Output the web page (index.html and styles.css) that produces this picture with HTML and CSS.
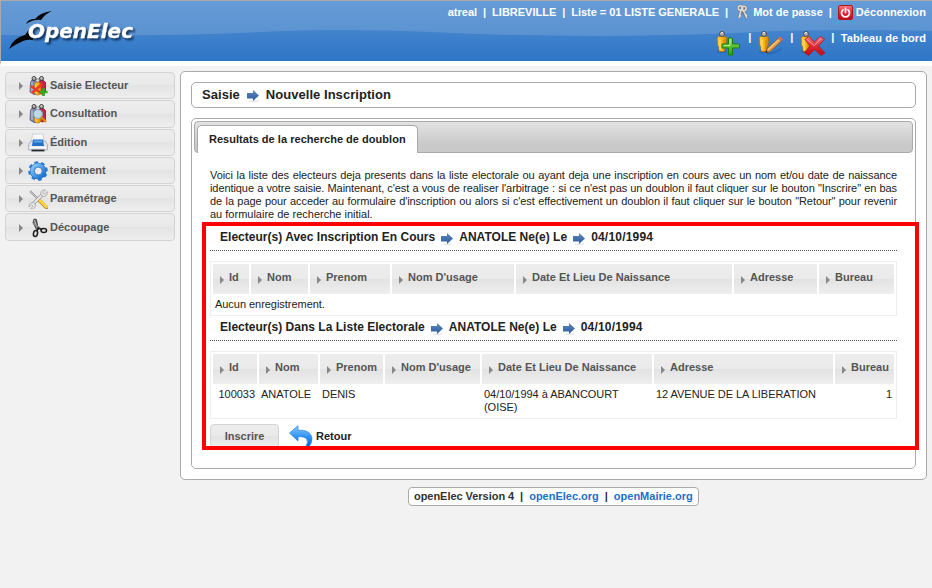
FILE: index.html
```html
<!DOCTYPE html>
<html lang="fr">
<head>
<meta charset="utf-8">
<title>openElec</title>
<link rel="stylesheet" href="styles.css">
</head>
<body>
<svg class="defs" width="0" height="0" aria-hidden="true">
  <defs>
    <linearGradient id="gArrow" x2="0" y2="1"><stop offset="0" stop-color="#5d87be"/><stop offset="1" stop-color="#2c5c9f"/></linearGradient>
    <linearGradient id="gMan" x2="1" y2="0"><stop offset="0" stop-color="#ffd24a"/><stop offset=".5" stop-color="#ffb414"/><stop offset="1" stop-color="#d98200"/></linearGradient>
    <linearGradient id="gGreen" x2="0" y2="1"><stop offset="0" stop-color="#8be05a"/><stop offset="1" stop-color="#2e9e12"/></linearGradient>
    <linearGradient id="gRed" x2="0" y2="1"><stop offset="0" stop-color="#f37c80"/><stop offset=".5" stop-color="#e02a35"/><stop offset="1" stop-color="#b80d18"/></linearGradient>
    <linearGradient id="gBack" x2="0" y2="1"><stop offset="0" stop-color="#8ccbff"/><stop offset=".55" stop-color="#2b90f5"/><stop offset="1" stop-color="#0b62dc"/></linearGradient>
    <linearGradient id="gGear" x2="1" y2="1"><stop offset="0" stop-color="#8ccbfd"/><stop offset="1" stop-color="#176fd0"/></linearGradient>
    <linearGradient id="gTop" x2="0" y2="1"><stop offset="0" stop-color="#659cd7"/><stop offset="1" stop-color="#5a92d1"/></linearGradient>
    <symbol id="arrow" viewBox="0 0 12 12"><path d="M2 11.200h9" stroke="#e3e7ee" stroke-width="1.400"/><path d="M0 3h6V0l6 5.500L6 11V8.500H0z" fill="url(#gArrow)"/></symbol>
    <symbol id="man" viewBox="0 0 12 24"><ellipse cx="6" cy="20.500" rx="5" ry="1.500" fill="#174f90" opacity=".4"/><path d="M1.300 7.500Q1 5.500 3 5.500h6q2 0 1.700 2L10 15l-1 .5-.5 5H3.200l-.5-5L1.500 14z" fill="url(#gMan)" stroke="#a86d08" stroke-width=".7"/><path d="M4 9v10" stroke="#ffe27b"/><path d="M8 9v10" stroke="#c77600" stroke-width=".7"/><circle cx="6" cy="3" r="2.500" fill="#aaa" stroke="#4b4540" stroke-width=".9"/><path d="M4.500 2.500q1-1.500 2.500-.8" stroke="#fff" fill="none"/></symbol>
    <symbol id="people" viewBox="0 0 18 20"><path d="M1.500 6.500 3 4h4.500L9 6v12l-4 .5L1 16z" fill="#8185a9" stroke="#545777" stroke-width=".8"/><path d="M3 6v10" stroke="#b9bbd2" stroke-width="1.300"/><path d="M10 4.500h4.500l2 2V16L14 18l-4-1z" fill="#c32743" stroke="#75172a" stroke-width=".8"/><circle cx="5" cy="2.500" r="2" fill="#aaa" stroke="#333" stroke-width=".9"/><circle cx="12.500" cy="2.500" r="2" fill="#aaa" stroke="#333" stroke-width=".9"/><path d="M4.300 1.800h1M11.800 1.800h1" stroke="#eee"/><circle cx="8.700" cy="4.500" r="1.800" fill="#ddd" stroke="#666" stroke-width=".7"/><path d="M5.500 8q3.500-4 6.500 0v9l-2 2H7.500l-2-2z" fill="url(#gMan)" stroke="#ae6e0a" stroke-width=".6"/></symbol>
  </defs>
</svg>

<header class="header">
  <svg class="wave" viewBox="0 0 931 60" preserveAspectRatio="none"><path d="M0 0H931V30Q850 28 770 30.200Q690 35 600 35Q510 35 430 31Q350 27.500 270 30.500Q190 34.500 100 34.500Q45 34.500 0 34z" fill="url(#gTop)"/></svg>
  <svg class="logo" width="145" height="60" viewBox="0 0 145 60">
    <path d="M26 24q2-5 9-5 6-7 17-8-7 3-11 9-7-1-15 4z" fill="#050505"/>
    <path d="M9 49q4-11 16-14 3-5 8-8v13q-5-1-10 1-7 3-14 8z" fill="#050505"/>
    <text class="wordmark" x="28" y="38" textLength="105" lengthAdjust="spacingAndGlyphs">OpenElec</text>
  </svg>
  <nav class="links">
    <div class="row">
      <span>atreal</span><i>|</i><span>LIBREVILLE</span><i>|</i><span class="list-name">Liste = 01 LISTE GENERALE</span><i class="wide">|</i>
      <a class="with-icon"><svg width="14" height="16" viewBox="0 0 14 16"><g fill="none" stroke="#777" stroke-width="3"><circle cx="4.500" cy="4" r="2"/><path d="M5 6l-2 8M6 6l5 8"/><circle cx="8" cy="4.500" r="2"/></g><g fill="none" stroke="#ddd" stroke-width="1.500"><circle cx="4.500" cy="4" r="2.200"/><circle cx="8" cy="4.500" r="2.200"/><path d="M5 6 3 14M7 6l4 8M3 12h2M9 12l2-1"/></g></svg>Mot de passe</a><i>|</i>
      <a class="with-icon power"><svg width="15" height="15" viewBox="0 0 15 15"><rect x=".5" y=".5" width="14" height="14" rx="1.500" fill="url(#gRed)" stroke="#b5121d"/><path d="M5 4.800a4 4 0 1 0 5 0M7.500 3v4.500" fill="none" stroke="#fff" stroke-width="1.700" stroke-linecap="round"/></svg>Déconnexion</a>
    </div>
    <div class="row tools">
      <svg width="26" height="26" viewBox="0 0 26 26"><use href="#man" width="12" height="24"/><path d="M12.500 7h4v6h7v4h-7v7h-4v-7H6v-4h6.500z" fill="url(#gGreen)" stroke="#18830b"/><path d="M14 8.500v6H8" fill="none" stroke="#b4ef91"/></svg><i>|</i>
      <svg width="26" height="26" viewBox="0 0 26 26"><use href="#man" width="12" height="24"/><path d="M9 23q8-1 14-5" stroke="#174f90" stroke-width="2" opacity=".4" fill="none"/><path d="M7.500 22 9 17.500 20.500 7l3 3L12 20.500z" fill="#e7a24d" stroke="#8d5522" stroke-width=".9"/><path d="M10 18.500 21 8.500" stroke="#ffd493"/><path d="m20.500 7 1.500-1.200q2-.3 2.500 2.500L23.500 10z" fill="#dd6a62"/><path d="m7.500 22 .8-2.500 1.500 1.500z" fill="#222"/></svg><i>|</i>
      <svg width="26" height="26" viewBox="0 0 26 26"><use href="#man" width="12" height="24"/><path d="m5 8.500 3.500-3 6 5.500 5.500-5.500 4.500 2.500-6 7 6.500 7-4 2.500-6.500-6-6 6L4.500 21.500l5.500-6.500z" fill="url(#gRed)" stroke="#ac1420" stroke-width=".8"/><path d="m6.800 8.200 7.500 6.500 6.500-7.200" fill="none" stroke="#f79da0"/></svg><i>|</i>
      <span class="dash">Tableau de bord</span>
    </div>
  </nav>
</header>

<div class="layout">
  <aside class="menu">
    <div class="item"><svg class="ico" viewBox="0 0 20 20"><use href="#people" x="1" width="18" height="20"/><path d="m3 10 11 8M14 8 4 17" stroke="#ec3b2b" stroke-width="2.500"/><path d="M15.500 12v8M11.500 16h8" stroke="#36a61b" stroke-width="2.600"/></svg>Saisie Electeur</div>
    <div class="item"><svg class="ico" viewBox="0 0 20 20"><use href="#people" x="1" width="18" height="20"/><circle cx="10" cy="10" r="4.500" fill="#b9dff5" fill-opacity=".9" stroke="#79a7c8"/><path d="m13 13 5 5" stroke="#ea8712" stroke-width="2.200"/></svg>Consultation</div>
    <div class="item"><svg class="ico" viewBox="0 0 20 20"><path d="M4.500 1h10.500l1 9H3.500z" fill="#f8f9fc" stroke="#bbc1cb" stroke-width=".7"/><path d="M2.500 8h15l2 4v5H.5v-5z" fill="#e1e4ea" stroke="#9ca3ad" stroke-width=".7"/><path d="M5 6.500h10l1 6.500H4z" fill="#2470c9"/><path d="M6 7.500h8l.5 2h-9z" fill="#5ba5ec"/><path d="M3.500 17.500h13" stroke="#26292d" stroke-width="1.800"/><path d="M2 14.500h16" stroke="#fff" stroke-width="1.500"/></svg>Édition</div>
    <div class="item"><svg class="ico" viewBox="0 0 20 20"><g transform="rotate(20 10 10)"><circle cx="10" cy="10" r="8.300" fill="none" stroke="#2a7bd0" stroke-width="3" stroke-dasharray="3.500 3.020"/><circle cx="10" cy="10" r="6" fill="none" stroke="#1f6cbf" stroke-width="4.600"/></g><circle cx="10" cy="10" r="5.800" fill="none" stroke="url(#gGear)" stroke-width="3.700"/><circle cx="10.300" cy="10" r="3.900" fill="#ececec" stroke="#236fbd" stroke-width=".8"/></svg>Traitement</div>
    <div class="item"><svg class="ico" viewBox="0 0 20 20"><path d="M2 2 11 11" stroke="#8b8b8b" stroke-width="1.800"/><path d="M2 2 11 11" stroke="#ddd" stroke-width=".8"/><path d="m11 11 7.500 7.500" stroke="#b88d16" stroke-width="3.700" stroke-linecap="round"/><path d="m11.500 11 7 7" stroke="#ffd542" stroke-width="2.500" stroke-linecap="round"/><path d="M4.500 15.500 15 5" stroke="#999" stroke-width="3.200"/><path d="M4.500 15.500 15 5" stroke="#e7e7e7" stroke-width="2"/><path d="M17.500.8 15 3.500l1.500 1.700 2.600-2.600q1.200 4-3 5-3 0-3.500-3 0-3.800 4.900-3.800zM1 18l2.500-2.300 1.500 1.500L2.500 20q4 .7 5-3 0-3.800-3.300-3.500Q.5 14 1 18z" fill="#e5e5e5" stroke="#909090" stroke-width=".6"/></svg>Paramétrage</div>
    <div class="item"><svg class="ico" viewBox="0 0 20 20"><path d="m6 1 2.500.5 2 10-1.500 1-4-8z" fill="#555" stroke="#222" stroke-width=".6"/><path d="m6.500 2 3 9" stroke="#ddd" stroke-width=".9"/><path d="m5 5 9 7" stroke="#888" stroke-width="1.800"/><ellipse cx="7.500" cy="15.500" rx="2" ry="3" fill="none" stroke="#222" stroke-width="1.600" transform="rotate(12 7.500 15.500)"/><ellipse cx="15.800" cy="12.500" rx="2.700" ry="2" fill="none" stroke="#222" stroke-width="1.600"/><path d="m9 13 1-3 4 1.500" fill="none" stroke="#222" stroke-width="1.400"/></svg>Découpage</div>
  </aside>

  <main class="main">
    <h1 class="title">Saisie<svg class="arr"><use href="#arrow"/></svg>Nouvelle Inscription</h1>
    <section class="tabs">
      <div class="tabbar"><div class="tab">Resultats de la recherche de doublon</div></div>
      <div class="panel">
        <p class="intro"><span>Voici la liste des electeurs deja presents dans la liste electorale ou ayant deja une inscription en cours avec un nom et/ou date de naissance</span> <span>identique a votre saisie. Maintenant, c'est a vous de realiser l'arbitrage : si ce n'est pas un doublon il faut cliquer sur le bouton "Inscrire" en bas</span> <span>de la page pour acceder au formulaire d'inscription ou alors si c'est effectivement un doublon il faut cliquer sur le bouton "Retour" pour revenir</span> <span>au formulaire de recherche initial.</span></p>
        <h2>Electeur(s) Avec Inscription En Cours<svg class="arr"><use href="#arrow"/></svg>ANATOLE Ne(e) Le<svg class="arr"><use href="#arrow"/></svg><span class="date">04/10/1994</span></h2>
        <table class="pending">
          <colgroup><col class="w36"><col class="w57"><col class="w80"><col class="w122"><col class="w216"><col class="w83"><col class="w75"></colgroup>
          <tr><th>Id</th><th>Nom</th><th>Prenom</th><th>Nom D'usage</th><th>Date Et Lieu De Naissance</th><th>Adresse</th><th>Bureau</th></tr>
          <tr><td colspan="7">Aucun enregistrement.</td></tr>
        </table>
        <h2>Electeur(s) Dans La Liste Electorale<svg class="arr"><use href="#arrow"/></svg>ANATOLE Ne(e) Le<svg class="arr"><use href="#arrow"/></svg><span class="date">04/10/1994</span></h2>
        <table class="listed">
          <colgroup><col class="w44"><col class="w59"><col class="w63"><col class="w95"><col class="w170"><col class="w179"><col class="w59"></colgroup>
          <tr><th>Id</th><th>Nom</th><th>Prenom</th><th>Nom D'usage</th><th>Date Et Lieu De Naissance</th><th>Adresse</th><th>Bureau</th></tr>
          <tr><td class="num">100033</td><td>ANATOLE</td><td>DENIS</td><td></td><td>04/10/1994 à ABANCOURT<br>(OISE)</td><td>12 AVENUE DE LA LIBERATION</td><td class="num">1</td></tr>
        </table>
        <div class="actions">
          <button class="btn">Inscrire</button>
          <a class="back"><svg width="24" height="22" viewBox="0 0 24 22"><path d="M.5 8 9 .7v4.500q13-.7 14 8.300 0 5-3.500 8.500h-3q3-4.500 1.500-7.500Q15.500 11 9 11.800V16z" fill="url(#gBack)" stroke="#2a7fdd" stroke-width=".7"/></svg>Retour</a>
        </div>
      </div>
    </section>
    <div class="highlight"></div>
  </main>
</div>

<footer class="footer"><div class="version"><span>openElec Version 4</span><i>|</i><a>openElec.org</a><i>|</i><a>openMairie.org</a></div></footer>
</body>
</html>
```

FILE: styles.css
```css
* { box-sizing: border-box; }
body {
  margin: 0;
  height: 588px;
  overflow: hidden;
  background: #f2f2f2;
  color: #222;
  font: 11px/13px "Liberation Sans", Arial, sans-serif;
}
.defs { position: absolute; }
i { font-style: normal; }
svg { flex: none; }

/* header */
.header {
  position: relative;
  display: flex;
  justify-content: space-between;
  height: 66px;
  border-top: 1px solid #aaa;
  border-left: 1px solid #aaa;
  border-bottom: 5px solid #fff;
  background: linear-gradient(#4b89cf, #4283cc 50%, #2e76c7);
}
.wave { position: absolute; left: 0; top: 0; width: 931px; height: 60px; }
.logo { position: relative; margin: -1px 0 0 -1px; }
.wordmark {
  font: italic bold 20px "DejaVu Sans", sans-serif;
  fill: #fff;
  stroke: #fff;
  stroke-width: .3px;
  filter: drop-shadow(2px 2px 1px rgba(0, 20, 50, .75));
}
.links {
  position: relative;
  width: 500px;
  padding-right: 6px;
  color: #fff;
  font-weight: bold;
}
.row { display: flex; justify-content: flex-end; height: 22px; align-items: center; white-space: nowrap; }
.row i { width: 15px; text-align: center; }
.row i.wide { width: 17px; padding-right: 2px; }
.list-name { letter-spacing: -.04px; }
.with-icon { display: flex; align-items: center; gap: 3px; }
.power { letter-spacing: .1px; }
.tools { height: 32px; align-items: flex-start; padding-top: 8px; }
.tools i { width: 16px; }
.tools i:last-of-type { margin-left: -1px; }
.tools .dash { line-height: 14px; letter-spacing: .07px; }

/* page */
.layout { display: flex; align-items: flex-start; }
.menu { width: 170px; margin: 6px 5px 0; display: grid; grid-auto-rows: 28.300px; }
.item {
  display: flex;
  align-items: center;
  height: 27.300px;
  padding-left: 13px;
  border: 1px solid #d3d3d3;
  border-radius: 4px;
  background: linear-gradient(#ededed, #e9e9e9 49%, #e3e3e3 50%, #eee);
  color: #555;
  font-weight: bold;
}
.item::before, th::before {
  content: "";
  border: 4px solid transparent;
  border-left-color: #888;
  border-right: 0;
}
.item::before { margin-top: 1px; }
.ico { width: 20px; height: 20px; margin: 1px 2px 0 5px; }

.main {
  position: relative;
  width: 747px;
  height: 409px;
  margin-top: 5px;
  padding: 10px;
  border: 1px solid #aaa;
  border-radius: 5px;
  background: #fff;
}
.title {
  display: flex;
  align-items: center;
  height: 26px;
  margin: 0 0 10px;
  padding: 0 10px 1px;
  border: 1px solid #aaa;
  border-radius: 5px;
  font-size: 13px;
  letter-spacing: .04px;
}
.arr { width: 12px; height: 12px; margin: 3px 6px 0; }
.title .arr { margin: 3px 7px 0; }
.tabs {
  height: 351px;
  padding: 2px;
  border: 1px solid #aaa;
  border-radius: 5px;
}
.tabbar {
  height: 32px;
  padding: 3px 2px 0;
  border: 1px solid #aaa;
  border-radius: 4px;
  background: linear-gradient(#e2e2e2, #c9c9c9 75%);
}
.tab {
  width: 221px;
  height: 28px;
  padding: 7px 0 0 11px;
  border: 1px solid #aaa;
  border-bottom: 0;
  border-radius: 5px 5px 0 0;
  background: #fff;
  font-weight: bold;
  white-space: nowrap;
  letter-spacing: .03px;
}
.panel { padding: 16px 16px 0; }
.intro { margin: 0 0 5px; }
.intro span { display: block; height: 13px; text-align-last: justify; letter-spacing: -.08px; }
.intro span:last-child { text-align-last: left; letter-spacing: 0; }
h2 {
  display: flex;
  align-items: center;
  height: 25px;
  margin: 0 0 10px;
  padding: 0 10px 2px;
  border-bottom: 1px dotted #555;
  font-size: 12px;
  white-space: nowrap;
  letter-spacing: .02px;
}
.date { letter-spacing: .2px; }
table {
  table-layout: fixed;
  width: 687px;
  border: 1px solid #eee;
  border-collapse: separate;
  border-spacing: 2px;
}
.pending { height: 55px; }
.listed { height: 68px; }
th {
  height: 30px;
  padding: 0 0 3px 7px;
  background: linear-gradient(#ededed, #eaeaea 49%, #e2e2e2 50%, #efefef);
  color: #555;
  text-align: left;
  white-space: nowrap;
}
th::before { display: inline-block; margin-right: 5px; vertical-align: -3px; }
td { padding: 2px; vertical-align: top; white-space: nowrap; letter-spacing: -.04px; }
.num { text-align: right; }
.w36 { width: 36px; }
.w44 { width: 44px; }
.w57 { width: 57px; }
.w59 { width: 59px; }
.w63 { width: 63px; }
.w75 { width: 75px; }
.w80 { width: 80px; }
.w83 { width: 83px; }
.w95 { width: 95px; }
.w122 { width: 122px; }
.w170 { width: 170px; }
.w179 { width: 179px; }
.w216 { width: 216px; }
.actions { display: flex; margin-top: 5px; gap: 10px; }
.btn {
  width: 69px;
  height: 25px;
  padding: 0;
  border: 1px solid #d3d3d3;
  border-radius: 4px;
  background: linear-gradient(#ededed, #e9e9e9 49%, #e3e3e3 50%, #eee);
  color: #555;
  font: bold 11px/13px "Liberation Sans", Arial, sans-serif;
}
.back { display: flex; align-items: center; gap: 3px; height: 24px; font-weight: bold; }
.highlight {
  position: absolute;
  left: 21px;
  top: 150px;
  width: 717px;
  height: 228px;
  border: 4px solid #f00;
}

/* footer */
.footer { display: flex; justify-content: center; margin-top: 7px; }
.version {
  display: flex;
  width: 291px;
  height: 19px;
  margin-left: 175px;
  padding: 2px 5px;
  border: 1px solid #aaa;
  border-radius: 4px;
  background: #fff;
  color: #333;
  font-weight: bold;
  white-space: nowrap;
}
.version span { letter-spacing: -.04px; }
.version i { width: 15px; text-align: center; }
.version a { color: #1c70c6; }
```
